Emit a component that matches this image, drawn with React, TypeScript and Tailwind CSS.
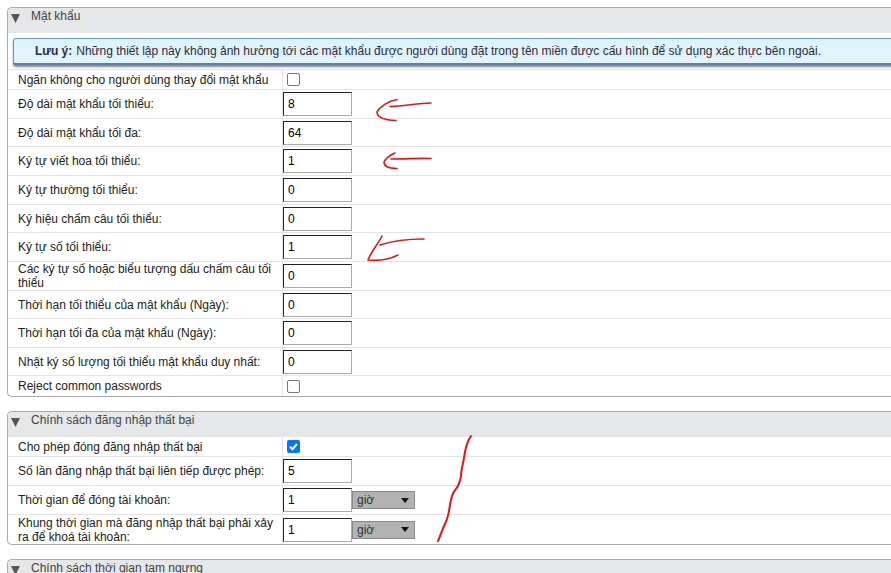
const passwordRows = [
  { label: 'Ngăn không cho người dùng thay đổi mật khẩu', kind: 'check', h: 'h-[20px]' },
  { label: 'Độ dài mật khẩu tối thiểu:', value: '8', h: 'h-[29px]' },
  { label: 'Độ dài mật khẩu tối đa:', value: '64', h: 'h-[28px]' },
  { label: 'Ký tự viết hoa tối thiểu:', value: '1', h: 'h-[29px]' },
  { label: 'Ký tự thường tối thiểu:', value: '0', h: 'h-[29px]' },
  { label: 'Ký hiệu chấm câu tối thiểu:', value: '0', h: 'h-[28px]' },
  { label: 'Ký tự số tối thiểu:', value: '1', h: 'h-[29px]' },
  { label: 'Các ký tự số hoặc biểu tượng dấu chấm câu tối thiểu', value: '0', h: 'h-[29px]' },
  { label: 'Thời hạn tối thiểu của mật khẩu (Ngày):', value: '0', h: 'h-[28px]' },
  { label: 'Thời hạn tối đa của mật khẩu (Ngày):', value: '0', h: 'h-[29px]' },
  { label: 'Nhật ký số lượng tối thiểu mật khẩu duy nhất:', value: '0', h: 'h-[28px]' },
  { label: 'Reject common passwords', kind: 'check', h: 'h-[20px]' },
]

const lockoutRows = [
  { label: 'Cho phép đóng đăng nhập thất bại', kind: 'checked', h: 'h-[20px]' },
  { label: 'Số lần đăng nhập thất bại liên tiếp được phép:', value: '5', h: 'h-[29px]' },
  { label: 'Thời gian để đóng tài khoản:', value: '1', unit: 'giờ', h: 'h-[29px]' },
  { label: 'Khung thời gian mà đăng nhập thất bại phải xảy ra để khoá tài khoản:', value: '1', unit: 'giờ', h: 'h-[29px]' },
]

type Row = { label: string; kind?: string; value?: string; unit?: string; h: string }

function PanelHeader({ title, h }: { title: string; h: string }) {
  return (
    <div className={`${h} flex items-start bg-[#e6e7e8] rounded-tl-[5px]`}>
      <svg width="10" height="9" viewBox="0 0 10 9" className="ml-[3px] mt-[6px] shrink-0">
        <path d="M0 0H9L4.5 9Z" fill="#555" />
      </svg>
      <span className="ml-[10px] mt-px leading-[14px] text-[#444]">{title}</span>
    </div>
  )
}

function SettingRow({ row, last }: { row: Row; last?: boolean }) {
  return (
    <div className={`${row.h} flex ${last ? '' : 'border-b border-[#e4e4e4]'}`}>
      <div className="w-[274px] shrink-0 pl-[10px] pr-[3px] flex items-center leading-[14px] tracking-[-0.01px] text-[#222]">
        {row.label}
      </div>
      <div className="flex-1 border-l border-[#e4e4e4] flex items-center">
        {row.kind === 'check' && (
          <span className="ml-[4px] w-[13px] h-[13px] bg-white border border-[#767676] rounded-[2px]" />
        )}
        {row.kind === 'checked' && (
          <span className="ml-[4px] w-[13px] h-[13px] bg-[#0075ff] rounded-[2px] flex items-center justify-center">
            <svg width="11" height="11" viewBox="0 0 11 11">
              <path d="M2 5.8L4.5 8.2L9 3" fill="none" stroke="#fff" strokeWidth="2" />
            </svg>
          </span>
        )}
        {row.value && (
          <input
            readOnly
            value={row.value}
            className="w-[69px] h-[24px] pl-[4px] text-[12px] text-black bg-white outline-none border border-t-[#222] border-l-[#222] border-r-[#aaa] border-b-[#aaa]"
          />
        )}
        {row.unit && (
          <div className="w-[63px] h-[18px] pl-[4px] pr-[3px] flex items-center justify-between bg-[#b2b2b2] border border-[#8a8a8a] text-[#333]">
            <span>{row.unit}</span>
            <svg width="8" height="5" viewBox="0 0 8 5" className="mr-[2px]">
              <path d="M0 0H8L4 5Z" fill="#111" />
            </svg>
          </div>
        )}
      </div>
    </div>
  )
}

function Panel({ title, rows, headerH, children }: { title: string; rows: Row[]; headerH: string; children?: React.ReactNode }) {
  return (
    <section className="w-[900px] bg-white border-t border-l border-b border-[#aaaaaa] rounded-l-[5px]">
      <PanelHeader title={title} h={headerH} />
      {children}
      {rows.map((row, i) => (
        <SettingRow key={row.label} row={row} last={i === rows.length - 1} />
      ))}
    </section>
  )
}

function RedMarks() {
  return (
    <svg width="891" height="573" viewBox="0 0 891 573" className="absolute left-0 top-0 pointer-events-none">
      <g fill="none" stroke="#f01010" strokeWidth="1.6" strokeLinecap="round" strokeLinejoin="round">
        <path d="M431 103C418 103 405 106 390 106.500" />
        <path d="M397 99.500C388 101 380 107 377 112C377 117 384 120 396 120.500" />
        <path d="M431 158.500C418 158 408 159 391 159" />
        <path d="M395 153C390 155 385 159 384 162C384 167 390 168.500 397 168.500" />
        <path d="M424 239C412 239 395 240 380 245" />
        <path d="M382 236C378 244 371 252 368 260C378 261 390 259 398 255" />
        <path d="M471 436C466 443 465 450 464 458C463 464 461 470 461 476C460 482 459 485 456 489C452 493 451 498 450 505C449 512 448 518 445 524C442 530 441 534 438 541" strokeWidth="2" />
      </g>
    </svg>
  )
}

export default function App() {
  return (
    <div className="relative w-[891px] h-[573px] overflow-hidden bg-white pl-[7px] pt-[7px] text-[12px] font-['Liberation_Sans',Arial,sans-serif]">
      <Panel title="Mật khẩu" rows={passwordRows} headerH="h-[25px]">
        <div className="h-[37px] border-b border-[#e4e4e4] pt-[5px] pl-[5px]">
          <div className="h-[27px] pl-[21px] flex items-center bg-[#e1f3fd] border border-[#5b9ae8] border-b-2 border-b-[#5f7fa8] rounded-l-[3px] shadow-[0_2px_2px_#888] tracking-[-0.015px] text-[#2c2c3a]">
            <b className="font-bold mr-[4px]">Lưu ý:</b>
            Những thiết lập này không ảnh hưởng tới các mật khẩu được người dùng đặt trong tên miền được cấu hình để sử dụng xác thực bên ngoài.
          </div>
        </div>
      </Panel>
      <div className="mt-[14px]">
        <Panel title="Chính sách đăng nhập thất bại" rows={lockoutRows} headerH="h-[25px]" />
      </div>
      <div className="mt-[14px]">
        <Panel title="Chính sách thời gian tạm ngưng" rows={[]} headerH="h-[25px]" />
      </div>
      <RedMarks />
    </div>
  )
}
